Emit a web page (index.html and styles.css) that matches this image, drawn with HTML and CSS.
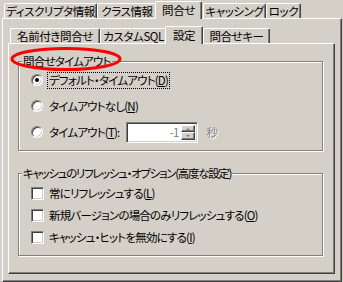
FILE: index.html
```html
<!DOCTYPE html>
<html lang="ja">
<head>
    <meta charset="UTF-8">
    <title>問合せ</title>
    <link rel="stylesheet" href="styles.css">
</head>
<body>
    <div class="dialog">
        <div class="tabs outer-tabs">
            <div class="tab tab-descriptor">ディスクリプタ情報</div>
            <div class="tab tab-class">クラス情報</div>
            <div class="tab tab-query active">問合せ</div>
            <div class="tab tab-cache">キャッシング</div>
            <div class="tab tab-lock">ロック</div>
        </div>
        <div class="panel outer-panel">
            <div class="tabs inner-tabs">
                <div class="tab tab-named">名前付き問合せ</div>
                <div class="tab tab-sql">カスタムSQL</div>
                <div class="tab tab-settings active">設定</div>
                <div class="tab tab-keys">問合せキー</div>
            </div>
            <div class="panel inner-panel">
                <div class="group timeout">
                    <span class="group-title">問合せタイムアウト</span>
                    <div class="option">
                        <span class="radio checked"></span>
                        <span class="label focused">デフォルト・タイムアウト(<u>D</u>)</span>
                    </div>
                    <div class="option">
                        <span class="radio"></span>
                        <span class="label">タイムアウトなし(<u>N</u>)</span>
                    </div>
                    <div class="option">
                        <span class="radio"></span>
                        <span class="label">タイムアウト(<u>T</u>):</span>
                        <div class="spin">
                            <span class="spin-value">-1</span>
                            <div class="spin-buttons">
                                <span class="spin-btn up"></span>
                                <span class="spin-btn down"></span>
                            </div>
                        </div>
                        <span class="unit">秒</span>
                    </div>
                </div>
                <div class="group refresh">
                    <span class="group-title">キャッシュのリフレッシュ・オプション(高度な設定)</span>
                    <div class="option check-row">
                        <span class="checkbox"></span>
                        <span class="label">常にリフレッシュする(<u>L</u>)</span>
                    </div>
                    <div class="option check-row">
                        <span class="checkbox"></span>
                        <span class="label">新規バージョンの場合のみリフレッシュする(<u>O</u>)</span>
                    </div>
                    <div class="option check-row">
                        <span class="checkbox"></span>
                        <span class="label">キャッシュ・ヒットを無効にする(<u>I</u>)</span>
                    </div>
                </div>
            </div>
        </div>
        <svg class="mark" width="114" height="28" viewBox="0 0 114 28">
            <ellipse cx="56" cy="13" rx="54" ry="10.5" fill="none" stroke="#f00" stroke-width="3"/>
        </svg>
    </div>
</body>
</html>
```

FILE: styles.css
```css
body {
    margin: 0;
    background-color: #d4d0c8;
    font-family: "Noto Sans CJK JP", "Noto Sans", sans-serif;
    font-size: 11.5px;
    letter-spacing: -0.8px;
    font-feature-settings: "palt";
    color: #000;
    overflow: hidden;
}

.dialog {
    position: relative;
    width: 343px;
    height: 282px;
    padding: 0 1px 0 2px;
    box-sizing: border-box;
}

/* tab strips */
.tabs {
    display: flex;
    align-items: flex-end;
    padding-left: 2px;
}

.outer-tabs {
    height: 18px;
}

.inner-tabs {
    height: 24px;
}

.tab {
    flex: none;
    height: 15px;
    line-height: 14px;
    box-sizing: border-box;
    text-align: center;
    letter-spacing: -0.4px;
    border-top: 1px solid #fff;
    border-left: 1px solid #fff;
    border-right: 1px solid #404040;
    border-radius: 2px 2px 0 0;
    box-shadow: inset -1px 0 0 #808080;
    white-space: nowrap;
}

.tab.active {
    position: relative;
    z-index: 1;
    height: 18px;
    margin: 0 0 -1px -2px;
    line-height: 16px;
    background-color: #d4d0c8;
}

.tab-descriptor { width: 93px; }
.tab-class { width: 60px; }
.tab-query { width: 47px; }
.tab-cache { width: 63px; margin-left: 1px; }
.tab-lock { width: 35px; }

.tab-named { width: 90px; }
.tab-sql { width: 67px; }
.tab-settings { width: 38px; }
.tab-keys { width: 67px; }

/* 3d panels */
.panel {
    border: 1px solid;
    border-color: #fff #404040 #404040 #fff;
    box-shadow: inset -1px -1px 0 #808080;
    box-sizing: border-box;
}

.outer-panel {
    height: 264px;
    padding: 0 6px 0 5px;
}

.inner-panel {
    height: 231px;
    padding: 17px 11px 0 9px;
}

/* group boxes */
.group {
    display: flex;
    flex-direction: column;
    border: 1px solid #808080;
    box-shadow: 1px 1px 0 #fff, inset 1px 1px 0 #fff;
    padding: 0 0 6px 12px;
}

.group-title {
    align-self: flex-start;
    height: 14px;
    line-height: 14px;
    margin: -8px 0 0 -9px;
    padding: 0 1px;
    background-color: #d4d0c8;
}

.timeout .option {
    height: 24px;
}

.timeout .option + .option {
    margin-top: 2px;
}

.refresh {
    margin-top: 22px;
    padding-bottom: 7px;
}

.refresh .group-title {
    margin-bottom: 2px;
    letter-spacing: -1.3px;
}

.option {
    display: flex;
    align-items: center;
    height: 22px;
}

.label {
    margin-left: 5px;
    padding: 0 1px;
    line-height: 15px;
}

.label.focused {
    outline: 1px dotted #000;
}

/* radio */
.radio {
    position: relative;
    width: 12px;
    height: 12px;
    box-sizing: border-box;
    border-radius: 50%;
    background-color: #fff;
    border: 1px solid;
    border-color: #808080 #fff #fff #808080;
    box-shadow: inset 1px 1px 0 #404040, inset -1px -1px 0 #d4d0c8;
}

.radio.checked::after {
    content: "";
    position: absolute;
    left: 3px;
    top: 3px;
    width: 4px;
    height: 4px;
    border-radius: 50%;
    background-color: #000;
}

/* checkbox */
.checkbox {
    width: 13px;
    height: 13px;
    box-sizing: border-box;
    background-color: #fff;
    border: 1px solid;
    border-color: #808080 #fff #fff #808080;
    box-shadow: inset 1px 1px 0 #404040, inset -1px -1px 0 #d4d0c8;
}

.check-row .label {
    margin-left: 4px;
}

/* spin box */
.spin {
    display: flex;
    margin-left: 5px;
    width: 72px;
    height: 21px;
    box-sizing: border-box;
    border: 1px solid;
    border-color: #808080 #fff #fff #808080;
    box-shadow: inset 1px 1px 0 #404040, inset -1px -1px 0 #d4d0c8;
    background-color: #fff;
    padding: 2px;
}

.spin-value {
    flex: 1;
    text-align: right;
    color: #808080;
    line-height: 15px;
    padding-right: 2px;
}

.spin-buttons {
    display: flex;
    flex-direction: column;
    width: 14px;
}

.spin-btn {
    flex: 1;
    position: relative;
    background-color: #d4d0c8;
    border: 1px solid;
    border-color: #fff #404040 #404040 #fff;
    box-shadow: inset -1px -1px 0 #808080;
}

.spin-btn::after {
    content: "";
    position: absolute;
    left: 4px;
    border-left: 2px solid transparent;
    border-right: 2px solid transparent;
}

.spin-btn.up::after {
    top: 2px;
    border-bottom: 2px solid #808080;
}

.spin-btn.down::after {
    top: 2px;
    border-top: 2px solid #808080;
}

.unit {
    margin-left: 9px;
    color: #808080;
    text-shadow: 1px 1px 0 #fff;
}

/* annotation */
.mark {
    position: absolute;
    left: 10px;
    top: 46px;
}
```
